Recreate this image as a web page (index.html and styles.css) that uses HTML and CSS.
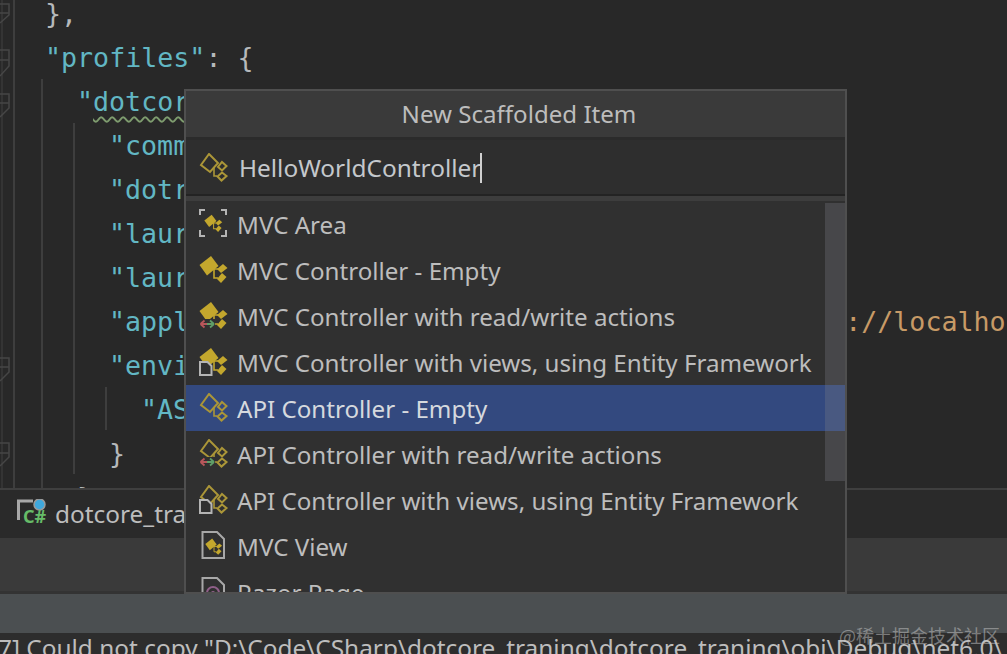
FILE: index.html
```html
<!DOCTYPE html>
<html lang="en">
<head>
<meta charset="utf-8">
<title>New Scaffolded Item</title>
<link rel="stylesheet" href="styles.css">
</head>
<body>
<svg width="0" height="0" class="defs">
  <defs>
    <symbol id="solid" viewBox="0 0 30 30">
      <path d="M12 1 L19.500 11 L8 20.500 L0.500 10 Z" fill="#c3a72d"/>
      <path d="M24 9 L28.500 13 L22 18 L18 14 Z" fill="#c3a72d"/>
      <path d="M23 18 L27.500 22 L22 28 L18 24 Z" fill="#c3a72d"/>
      <path d="M15 13 V23 H19 M15 14 H19" fill="none" stroke="#c3a72d" stroke-width="1.600"/>
    </symbol>
    <symbol id="outline" viewBox="0 0 30 30">
      <path d="M10 1 L19 10 L11 19 L2 12 Z" fill="none" stroke="#ab9638" stroke-width="2"/>
      <path d="M23 9 L27.500 13 L23 17.500 L19 14 Z" fill="none" stroke="#ab9638" stroke-width="2"/>
      <path d="M23 19.500 L27.500 23 L22.500 27.500 L18.500 23.500 Z" fill="none" stroke="#ab9638" stroke-width="2"/>
      <path d="M15 14 V23 H18" fill="none" stroke="#ab9638" stroke-width="1.600"/>
    </symbol>
    <symbol id="arrows" viewBox="0 0 30 30">
      <rect x="0" y="18" width="16" height="12" fill="#303030"/>
      <path d="M1.500 23 L5.500 19.500 M1.500 23 L5.500 26.500 M1.500 23 H8" fill="none" stroke="#b8565a" stroke-width="1.800"/>
      <path d="M15 23 L11 19.500 M15 23 L11 26.500 M8 23 H15" fill="none" stroke="#5f9e68" stroke-width="1.800"/>
    </symbol>
    <symbol id="page" viewBox="0 0 30 30">
      <path d="M1 15 H8.500 L12.500 19 V28 H1 Z" fill="#303030" stroke="#b4b4b4" stroke-width="2"/>
    </symbol>
  </defs>
</svg>

<div class="app">
  <main class="editor">
    <svg class="gutter" viewBox="0 0 120 490" aria-hidden="true">
      <g fill="none" stroke="#464646" stroke-width="1.500">
        <path d="M14 0 V490 M42 79 V490 M74 123 V474 M106 387 V430"/>
        <path d="M2 0 V490" stroke="#383838"/>
        <path d="M0 4 H9 V15 L0 23 M0 13 H9"/>
        <path d="M0 50 H9 V66 L0 76 M0 60 H9"/>
        <path d="M0 94 H9 V108 L0 117 M0 103 H9"/>
        <path d="M0 358 H9 V372 L0 381 M0 367 H9"/>
        <path d="M0 443 H9 V457 L0 466 M0 453 H9"/>
      </g>
    </svg>
    <pre class="code"><span class="l0"><span class="punct">},</span></span>
<span class="l0"><span class="key">"profiles"</span><span class="punct">: {</span></span>
<span class="l1"><span class="key">"<span class="squiggle">dotcor</span></span></span>
<span class="l2"><span class="key">"comm</span></span>
<span class="l2"><span class="key">"dotr</span></span>
<span class="l2"><span class="key">"laur</span></span>
<span class="l2"><span class="key">"laur</span></span>
<span class="l2"><span class="key">"appl</span><span class="url">://localhost</span></span>
<span class="l2"><span class="key">"envi</span></span>
<span class="l3"><span class="key">"AS</span></span>
<span class="l2"><span class="punct">}</span></span>
<span class="l1"><span class="punct">}</span></span></pre>
  </main>

  <div class="tabbar">
    <svg class="tab-icon" viewBox="0 0 30 30" aria-hidden="true">
      <path d="M1.500 21 V2 H16" fill="none" stroke="#a8a8a8" stroke-width="3"/>
      <circle cx="22.500" cy="5.500" r="5.500" fill="#3fa7dc" stroke="#9a9a9a" stroke-width="1.500"/>
    </svg>
    <span class="tab-sharp">C#</span>
    <span class="tab-name">dotcore_tra</span>
  </div>
  <div class="toolbar"></div>
  <div class="statusbar"></div>
  <div class="output">
    <span class="output-text">7] Could not copy "D:\Code\CSharp\dotcore_traning\dotcore_traning\obj\Debug\net6.0\</span>
    <span class="watermark">@稀土掘金技术社区</span>
  </div>
</div>

<section class="dialog">
  <header class="dialog-title">New Scaffolded Item</header>
  <div class="dialog-input">
    <svg class="icon" aria-hidden="true"><use href="#outline"/></svg>
    <span class="input-text">HelloWorldController</span><span class="caret"></span>
  </div>
  <div class="list-wrap">
    <ul class="list">
      <li class="row">
        <span class="icon-box">
          <svg class="icon" viewBox="0 0 30 30" aria-hidden="true">
            <path d="M1 6 V1 H6 M22 1 H27 V6 M1 21 V27 H6 M22 27 H27 V21" fill="none" stroke="#b4b4b4" stroke-width="2"/>
            <g transform="translate(5 5) scale(.64)"><use href="#solid" width="30" height="30"/></g>
          </svg>
        </span>MVC Area
      </li>
      <li class="row"><span class="icon-box"><svg class="icon" aria-hidden="true"><use href="#solid"/></svg></span>MVC Controller - Empty</li>
      <li class="row"><span class="icon-box"><svg class="icon" aria-hidden="true"><use href="#solid"/><use href="#arrows"/></svg></span>MVC Controller with read/write actions</li>
      <li class="row"><span class="icon-box"><svg class="icon" aria-hidden="true"><use href="#solid"/><use href="#page"/></svg></span>MVC Controller with views, using Entity Framework</li>
      <li class="row selected"><span class="icon-box"><svg class="icon" aria-hidden="true"><use href="#outline"/></svg></span>API Controller - Empty</li>
      <li class="row"><span class="icon-box"><svg class="icon" aria-hidden="true"><use href="#outline"/><use href="#arrows"/></svg></span>API Controller with read/write actions</li>
      <li class="row"><span class="icon-box"><svg class="icon" aria-hidden="true"><use href="#outline"/><use href="#page"/></svg></span>API Controller with views, using Entity Framework</li>
      <li class="row">
        <span class="icon-box">
          <svg class="icon" viewBox="0 0 30 30" aria-hidden="true">
            <path d="M3.500 1 H18 L25 8 V27 H3.500 Z" fill="none" stroke="#a8a8a8" stroke-width="2"/>
            <g transform="translate(6 7) scale(.6)"><use href="#solid" width="30" height="30"/></g>
          </svg>
        </span>MVC View
      </li>
      <li class="row">
        <span class="icon-box">
          <svg class="icon" viewBox="0 0 30 30" aria-hidden="true">
            <path d="M3.500 1 H18 L25 8 V27 H3.500 Z" fill="none" stroke="#a8a8a8" stroke-width="2"/>
            <circle cx="14" cy="16" r="6" fill="none" stroke="#8f5f88" stroke-width="2"/>
            <circle cx="14" cy="16" r="2" fill="#8f5f88"/>
          </svg>
        </span>Razor Page
      </li>
    </ul>
    <div class="scrollbar"></div>
  </div>
</section>
</body>
</html>
```

FILE: styles.css
```css
* { box-sizing: border-box; }
html, body { margin: 0; padding: 0; height: 100%; overflow: hidden; background: #282828; }
.defs { position: absolute; }
.app { display: flex; flex-direction: column; width: 1007px; height: 654px; overflow: hidden; }

.editor { position: relative; height: 490px; flex: none; overflow: hidden; background: #282828; border-bottom: 2px solid #3f3f3f; }
.gutter { position: absolute; left: 0; top: 0; width: 120px; height: 490px; }
.code { margin: -8px 0 0; padding-left: 45px; font: 26.650px/44px "DejaVu Sans Mono", "Liberation Mono", monospace; white-space: pre; color: #b6b9bb; position: relative; }
.l1 { margin-left: 32px; }
.l2 { margin-left: 64px; }
.l3 { margin-left: 96px; }
.key { color: #62b7c4; }
.punct { color: #b6b9bb; }
.url { color: #c79a66; margin-left: 656px; }
.squiggle { text-decoration: underline wavy #7e9c6e 1.500px; text-underline-offset: 5px; }

.tabbar { display: flex; align-items: center; height: 48px; flex: none; background: #2a2a2a; padding-left: 17px; position: relative; }
.tab-icon { width: 30px; height: 30px; flex: none; }
.tab-sharp { position: absolute; left: 23px; top: 16px; font: 700 18px/20px "Noto Sans", sans-serif; color: #66bb68; }
.tab-name { margin-left: 8px; font: 24.400px/30px "Noto Sans", sans-serif; color: #bdbdbd; }
.toolbar { height: 56px; flex: none; background: #3a3a3a; border-bottom: 3px solid #333; }
.statusbar { height: 39px; flex: none; background: #4b4f51; }
.output { position: relative; flex: 1; background: #2d2d2d; white-space: nowrap; }
.output-text { display: block; margin-left: -2px; font: 24.400px/30px "Noto Sans", sans-serif; color: #bdbdbd; }
.watermark { position: absolute; right: 7px; top: -10px; font: 18px/24px "Noto Sans CJK SC", "Noto Sans", sans-serif; color: rgba(200, 200, 200, .5); }

.dialog { position: absolute; left: 184px; top: 89px; width: 663px; height: 505px; display: flex; flex-direction: column; background: #303030; border: 2px solid #4f4f4f; overflow: hidden; }
.dialog-title { height: 49px; flex: none; display: flex; align-items: center; justify-content: center; padding-left: 7px; background: #3a3a3a; border-bottom: 3px solid #2b2b2b; font: 24.100px/30px "Noto Sans", sans-serif; color: #bdbdbd; }
.dialog-input { height: 61px; flex: none; display: flex; align-items: center; padding-left: 13px; background: #2e2e2e; border-bottom: 5px solid #3d3d3d; box-shadow: inset 0 -2px 0 #232323; font: 24.400px/30px "Noto Sans", sans-serif; color: #c4c8cc; }
.input-text { margin-left: 10px; }
.caret { width: 2px; height: 30px; background: #d0d0d0; margin-left: -1px; }
.list-wrap { position: relative; flex: 1; overflow: hidden; }
.list { list-style: none; margin: 0; padding: 0; }
.row { display: flex; align-items: center; height: 46px; padding: 1px 0 0 13px; font: 24.150px/30px "Noto Sans", sans-serif; color: #bdbdbd; white-space: nowrap; }
.row .icon-box { margin-top: -1px; }
.row.selected { background: #33497f; color: #d6d9de; }
.icon-box { display: flex; width: 38px; flex: none; }
.icon { width: 30px; height: 30px; flex: none; }
.scrollbar { position: absolute; right: 0; top: 2px; width: 20px; height: 278px; background: rgba(125, 125, 135, .3); }
```
